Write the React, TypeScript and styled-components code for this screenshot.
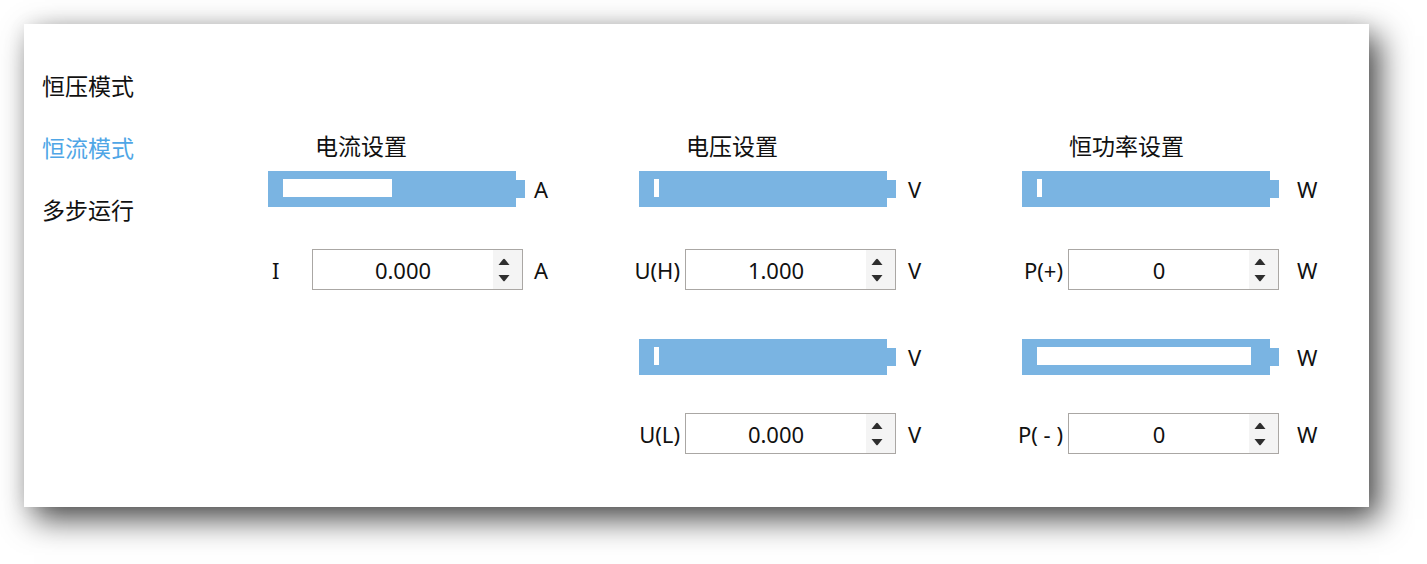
import React from "react";
import styled, { createGlobalStyle } from "styled-components";

const GlobalStyle = createGlobalStyle`
  html, body {
    margin: 0;
    background: #fff;
  }
  body {
    padding: 24px;
    min-height: 564px;
    box-sizing: border-box;
    font-family: "Noto Sans", "Noto Sans CJK SC", sans-serif;
    color: #111;
  }
`;

const Panel = styled.div`
  width: 1345px;
  height: 483px;
  box-sizing: border-box;
  background: #fff;
  box-shadow: 10px 12px 30px rgba(0, 0, 0, 0.72), 0 0 18px rgba(0, 0, 0, 0.06);
  display: flex;
  padding: 46px 0 0 18px;
`;

const Menu = styled.div`
  width: 226px;
  flex-shrink: 0;
  display: flex;
  flex-direction: column;
  gap: 32px;
`;

const MenuItem = styled.div<{ $active?: boolean }>`
  font-size: 23px;
  line-height: 30px;
  height: 30px;
  font-family: "Noto Sans CJK SC", sans-serif;
  color: ${p => (p.$active ? "#4fa6e6" : "#111")};
`;

const Content = styled.div`
  display: flex;
  margin-top: 62px;
  align-items: flex-start;
`;

const Column = styled.div<{ $width: number }>`
  width: ${p => p.$width}px;
  flex-shrink: 0;
  display: flex;
  flex-direction: column;
`;

const Title = styled.div`
  font-size: 23px;
  line-height: 30px;
  height: 30px;
  margin-top: -2px;
  padding-left: 47px;
  font-family: "Noto Sans CJK SC", sans-serif;
`;

const Row = styled.div<{ $top: number }>`
  display: flex;
  align-items: center;
  margin-top: ${p => p.$top}px;
`;

const Battery = styled.div`
  display: flex;
  align-items: center;
`;

const BatteryBody = styled.div`
  width: 248px;
  height: 36px;
  box-sizing: border-box;
  padding: 8px 19px 10px 15px;
  background: #7ab4e2;
  display: flex;
`;

const Chunk = styled.div`
  height: 100%;
  min-width: 5px;
  background: #fff;
`;

const BatteryTip = styled.div`
  width: 9px;
  height: 18px;
  background: #7ab4e2;
`;

const Label = styled.div<{ $width: number; $start?: boolean }>`
  width: ${p => p.$width}px;
  flex-shrink: 0;
  display: flex;
  justify-content: ${p => (p.$start ? "flex-start" : "flex-end")};
  padding: ${p => (p.$start ? "0 0 0 4px" : "0 5px 0 0")};
  box-sizing: border-box;
  white-space: nowrap;
  font-size: 22px;
`;

const Unit = styled.div<{ $gap: number }>`
  margin-left: ${p => p.$gap}px;
  font-size: 22px;
  line-height: 30px;
`;

const Spin = styled.div`
  width: 211px;
  height: 41px;
  box-sizing: border-box;
  border: 1px solid #aaa7a4;
  display: flex;
  background: #fff;
`;

const SpinValue = styled.div`
  flex: 1;
  display: flex;
  align-items: center;
  justify-content: center;
  font-size: 22px;
`;

const SpinButtons = styled.div`
  width: 29px;
  padding: 8px 8px 7px 0;
  box-sizing: border-box;
  background: #f4f4f4;
  display: flex;
  flex-direction: column;
  justify-content: space-between;
  align-items: center;
  svg {
    width: 12px;
    height: 8px;
    fill: #2e2e2e;
  }
`;

const Arrow = ({ down }: { down?: boolean }) => (
  <svg viewBox="0 0 12 8">
    {down ? <path d="M0.5 1h11l-4.6 5.8q-0.9 1-1.8 0z" /> : <path d="M0.5 7h11l-4.6-5.8q-0.9-1-1.8 0z" />}
  </svg>
);

function Gauge({ fill }: { fill: number }) {
  return (
    <Battery>
      <BatteryBody>
        <Chunk style={{ width: `${fill}%` }} />
      </BatteryBody>
      <BatteryTip />
    </Battery>
  );
}

function SpinBox({ value }: { value: string }) {
  return (
    <Spin>
      <SpinValue>{value}</SpinValue>
      <SpinButtons>
        <Arrow />
        <Arrow down />
      </SpinButtons>
    </Spin>
  );
}

type Field = { label: string; value: string; fill: number };

function Section({
  title,
  unit,
  gap,
  spinGap,
  labelWidth,
  width,
  fields,
  startLabel,
}: {
  title: string;
  unit: string;
  gap: number;
  spinGap: number;
  labelWidth: number;
  width: number;
  fields: Field[];
  startLabel?: boolean;
}) {
  return (
    <Column $width={width}>
      <Title>{title}</Title>
      {fields.map((f, i) => (
        <React.Fragment key={f.label}>
          <Row $top={i === 0 ? 11 : 49}>
            <Gauge fill={f.fill} />
            <Unit $gap={gap}>{unit}</Unit>
          </Row>
          <Row $top={i === 0 ? 42 : 38}>
            <Label $width={labelWidth} $start={startLabel}>
              {f.label}
            </Label>
            <SpinBox value={f.value} />
            <Unit $gap={spinGap}>{unit}</Unit>
          </Row>
        </React.Fragment>
      ))}
    </Column>
  );
}

export default function App() {
  return (
    <>
      <GlobalStyle />
      <Panel>
        <Menu>
          <MenuItem>恒压模式</MenuItem>
          <MenuItem $active>恒流模式</MenuItem>
          <MenuItem>多步运行</MenuItem>
        </Menu>
        <Content>
          <Section
            title="电流设置"
            unit="A"
            gap={9}
            spinGap={11}
            labelWidth={44}
            width={371}
            startLabel
            fields={[{ label: "I", value: "0.000", fill: 51 }]}
          />
          <Section
            title="电压设置"
            unit="V"
            gap={12}
            spinGap={12}
            labelWidth={46}
            width={383}
            fields={[
              { label: "U(H)", value: "1.000", fill: 0 },
              { label: "U(L)", value: "0.000", fill: 0 },
            ]}
          />
          <Section
            title="恒功率设置"
            unit="W"
            gap={18}
            spinGap={18}
            labelWidth={46}
            width={320}
            fields={[
              { label: "P(+)", value: "0", fill: 0 },
              { label: "P( - )", value: "0", fill: 100 },
            ]}
          />
        </Content>
      </Panel>
    </>
  );
}
